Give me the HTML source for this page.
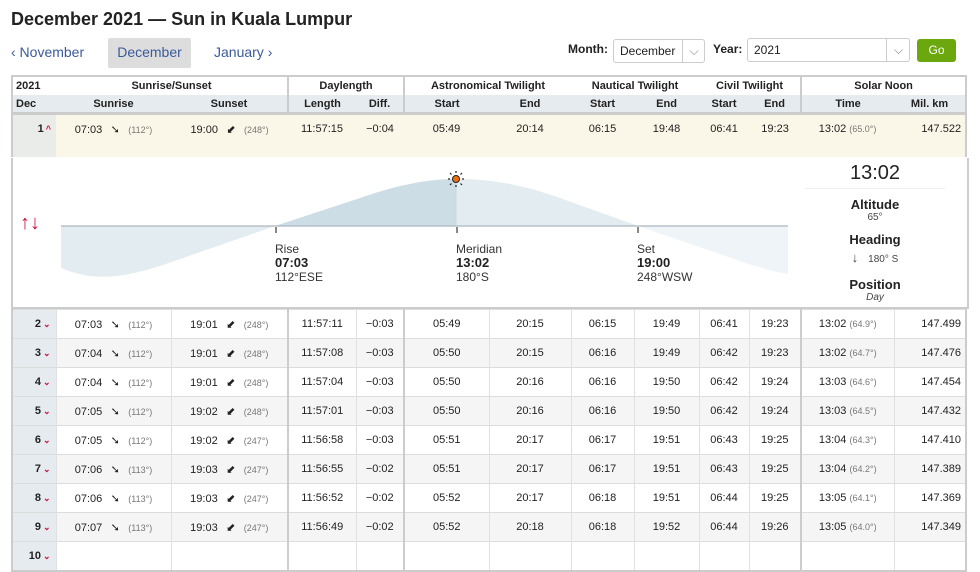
<!DOCTYPE html>
<html><head><meta charset="utf-8"><style>
body{margin:0;background:#fff;font-family:"Liberation Sans",Arial,sans-serif;color:#222;width:980px;height:546px;overflow:hidden;position:relative}
h1{position:absolute;left:11px;top:9px;margin:0;font-size:18px;font-weight:bold;color:#222}
.nav{position:absolute;top:38px;height:30px;line-height:28px;font-size:14px;color:#3a5a9c}
.sel{position:absolute;top:39px;height:22px;border:1px solid #ccc;border-radius:3px;font-size:12px;line-height:22px;background:#fff}
.lbl{position:absolute;top:42px;font-size:12px;font-weight:bold}
table{position:absolute;left:11px;top:75px;border-collapse:collapse;table-layout:fixed;width:954px;font-size:11px;border:2px solid #ccc}
td,th{padding:0;text-align:center;white-space:nowrap;overflow:hidden}
th{font-weight:bold;font-size:11px}
tr.h1 th{height:18px;background:#fff}
tr.h2 th{height:17px;background:#e6ebef;border-bottom:3px solid #ccc}
.g{border-left:2px solid #ccc}
tr.d td{height:28px;border-top:1px solid #ddd;border-left:1px solid #e0e0e0}
tr.d td.g{border-left:2px solid #ccc}
tr.d td.dc{background:#e6ebef;text-align:right;padding-right:5px;font-weight:bold;color:#222}
tr.alt td{background:#f5f5f5}
tr.alt td.dc{background:#e6ebef}
.dc i{color:#d0103a;font-style:normal;font-size:9px;margin-left:2px}
.s{color:#777;font-size:9px}
.ar{display:inline-block;width:14px;font-size:11px;margin:0 6px}
tr.y td{background:#fbf7e8;height:34px;vertical-align:top;padding-top:8px;border-left:none;border-top:none}
tr.y td.dc{background:#e9ece8}
.r{text-align:right!important;padding-right:4px!important}
</style></head><body>
<h1>December 2021 — Sun in Kuala Lumpur</h1>
<div class="nav" style="left:11px">‹ November</div>
<div class="nav" style="left:108px;width:83px;background:#ddd;border-radius:2px;text-align:center">December</div>
<div class="nav" style="left:214px">January ›</div>
<div class="lbl" style="left:568px">Month:</div>
<div class="sel" style="left:613px;width:90px"><span style="padding-left:6px">December</span><span style="position:absolute;left:68px;top:0;width:22px;border-left:1px solid #ccc;text-align:center;color:#888">⌵</span></div>
<div class="lbl" style="left:713px">Year:</div>
<div class="sel" style="left:747px;width:161px;top:38px"><span style="padding-left:6px">2021</span><span style="position:absolute;left:138px;top:0;width:23px;border-left:1px solid #ccc;text-align:center;color:#888">⌵</span></div>
<div style="position:absolute;left:917px;top:39px;width:39px;height:23px;background:#6aa80e;border-radius:3px;color:#fff;font-size:12px;text-align:center;line-height:23px">Go</div>

<table style="border-bottom:none">
<colgroup><col style="width:44px"><col style="width:115px"><col style="width:117px"><col style="width:68px"><col style="width:48px"><col style="width:85px"><col style="width:82px"><col style="width:63px"><col style="width:65px"><col style="width:50px"><col style="width:52px"><col style="width:93px"><col style="width:72px"></colgroup>
<tr class="h1"><th style="text-align:left;padding-left:3px">2021</th><th colspan="2">Sunrise/Sunset</th><th colspan="2" class="g">Daylength</th><th colspan="2" class="g">Astronomical Twilight</th><th colspan="2">Nautical Twilight</th><th colspan="2">Civil Twilight</th><th colspan="2" class="g">Solar Noon</th></tr>
<tr class="h2"><th style="text-align:left;padding-left:3px">Dec</th><th>Sunrise</th><th>Sunset</th><th class="g">Length</th><th>Diff.</th><th class="g">Start</th><th>End</th><th>Start</th><th>End</th><th>Start</th><th>End</th><th class="g">Time</th><th>Mil. km</th></tr>
<tr class="d y"><td class="dc">1<i>^</i></td><td>07:03<span class="ar">➘</span><span class="s">(112°)</span></td><td>19:00<span class="ar">⬋</span><span class="s">(248°)</span></td><td>11:57:15</td><td>−0:04</td><td>05:49</td><td>20:14</td><td>06:15</td><td>19:48</td><td>06:41</td><td>19:23</td><td>13:02 <span class="s">(65.0°)</span></td><td class="r">147.522</td></tr>
</table>
<div style="position:absolute;left:11px;top:158px;width:954px;height:149px;border-left:2px solid #ccc;border-right:2px solid #ccc;border-bottom:2px solid #ccc;box-sizing:content-box;background:#fff"></div>
<!-- chart -->
<svg style="position:absolute;left:0;top:158px" width="980" height="150">
<path d="M61 68 L61 110 C90 122 115 122 160 108 L275 68 Z" fill="#e3ecf0"/>
<path d="M275 68 L360 40 C400 26 430 21 456 21 L456 68 Z" fill="#cddde5"/>
<path d="M456 68 L456 21 C490 21 520 26 560 40 L638 68 Z" fill="#e3ecf0"/>
<path d="M638 68 L720 96 C745 105 765 112 788 116 L788 68 Z" fill="#eef4f7"/>
<line x1="61" y1="68" x2="788" y2="68" stroke="#aab8c0" stroke-width="1.2"/>
<line x1="456" y1="21" x2="456" y2="68" stroke="#c8d8e0"/>
<rect x="275" y="69" width="2" height="6" fill="#888"/><rect x="456" y="69" width="2" height="6" fill="#888"/><rect x="637" y="69" width="2" height="6" fill="#888"/>
<circle cx="456" cy="21" r="3.5" fill="#f07010" stroke="#222" stroke-width="1"/>
<g stroke="#222" stroke-width="1.2"><line x1="456" y1="13" x2="456" y2="15"/><line x1="456" y1="27" x2="456" y2="29"/><line x1="448" y1="21" x2="450" y2="21"/><line x1="462" y1="21" x2="464" y2="21"/><line x1="450" y1="15" x2="451.5" y2="16.5"/><line x1="460.5" y1="25.5" x2="462" y2="27"/><line x1="462" y1="15" x2="460.5" y2="16.5"/><line x1="450" y1="27" x2="451.5" y2="25.5"/></g>
</svg>
<div style="position:absolute;left:20px;top:212px;color:#d0103a;font-size:20px">↑↓</div>
<div style="position:absolute;left:275px;top:242px;font-size:12px;line-height:14px;color:#333">Rise<br><b style="font-size:13px;color:#222">07:03</b><br>112°ESE</div>
<div style="position:absolute;left:456px;top:242px;font-size:12px;line-height:14px;color:#333">Meridian<br><b style="font-size:13px;color:#222">13:02</b><br>180°S</div>
<div style="position:absolute;left:637px;top:242px;font-size:12px;line-height:14px;color:#333">Set<br><b style="font-size:13px;color:#222">19:00</b><br>248°WSW</div>
<div style="position:absolute;left:805px;top:160px;width:140px;text-align:center;color:#222">
<div style="font-size:20px;height:28px;line-height:26px;border-bottom:1px solid #eee">13:02</div>
<div style="font-size:13px;font-weight:bold;margin-top:8px">Altitude</div><div style="font-size:10px;color:#444">65°</div>
<div style="font-size:13px;font-weight:bold;margin-top:9px">Heading</div><div style="font-size:10px;color:#444;margin-top:3px"><b style="font-size:13px;margin-right:10px">↓</b>180° S</div>
<div style="font-size:13px;font-weight:bold;margin-top:12px">Position</div><div style="font-size:10px;color:#444;font-style:italic">Day</div>
</div>

<table style="top:309px;border-top:none">
<colgroup><col style="width:44px"><col style="width:115px"><col style="width:117px"><col style="width:68px"><col style="width:48px"><col style="width:85px"><col style="width:82px"><col style="width:63px"><col style="width:65px"><col style="width:50px"><col style="width:52px"><col style="width:93px"><col style="width:72px"></colgroup>
<tr class="d"><td class="dc">2<i>⌄</i></td><td>07:03<span class="ar">➘</span><span class="s">(112°)</span></td><td>19:01<span class="ar">⬋</span><span class="s">(248°)</span></td><td class="g">11:57:11</td><td>−0:03</td><td class="g">05:49</td><td>20:15</td><td>06:15</td><td>19:49</td><td>06:41</td><td>19:23</td><td class="g">13:02 <span class="s">(64.9°)</span></td><td class="r">147.499</td></tr>
<tr class="d alt"><td class="dc">3<i>⌄</i></td><td>07:04<span class="ar">➘</span><span class="s">(112°)</span></td><td>19:01<span class="ar">⬋</span><span class="s">(248°)</span></td><td class="g">11:57:08</td><td>−0:03</td><td class="g">05:50</td><td>20:15</td><td>06:16</td><td>19:49</td><td>06:42</td><td>19:23</td><td class="g">13:02 <span class="s">(64.7°)</span></td><td class="r">147.476</td></tr>
<tr class="d"><td class="dc">4<i>⌄</i></td><td>07:04<span class="ar">➘</span><span class="s">(112°)</span></td><td>19:01<span class="ar">⬋</span><span class="s">(248°)</span></td><td class="g">11:57:04</td><td>−0:03</td><td class="g">05:50</td><td>20:16</td><td>06:16</td><td>19:50</td><td>06:42</td><td>19:24</td><td class="g">13:03 <span class="s">(64.6°)</span></td><td class="r">147.454</td></tr>
<tr class="d alt"><td class="dc">5<i>⌄</i></td><td>07:05<span class="ar">➘</span><span class="s">(112°)</span></td><td>19:02<span class="ar">⬋</span><span class="s">(248°)</span></td><td class="g">11:57:01</td><td>−0:03</td><td class="g">05:50</td><td>20:16</td><td>06:16</td><td>19:50</td><td>06:42</td><td>19:24</td><td class="g">13:03 <span class="s">(64.5°)</span></td><td class="r">147.432</td></tr>
<tr class="d"><td class="dc">6<i>⌄</i></td><td>07:05<span class="ar">➘</span><span class="s">(112°)</span></td><td>19:02<span class="ar">⬋</span><span class="s">(247°)</span></td><td class="g">11:56:58</td><td>−0:03</td><td class="g">05:51</td><td>20:17</td><td>06:17</td><td>19:51</td><td>06:43</td><td>19:25</td><td class="g">13:04 <span class="s">(64.3°)</span></td><td class="r">147.410</td></tr>
<tr class="d alt"><td class="dc">7<i>⌄</i></td><td>07:06<span class="ar">➘</span><span class="s">(113°)</span></td><td>19:03<span class="ar">⬋</span><span class="s">(247°)</span></td><td class="g">11:56:55</td><td>−0:02</td><td class="g">05:51</td><td>20:17</td><td>06:17</td><td>19:51</td><td>06:43</td><td>19:25</td><td class="g">13:04 <span class="s">(64.2°)</span></td><td class="r">147.389</td></tr>
<tr class="d"><td class="dc">8<i>⌄</i></td><td>07:06<span class="ar">➘</span><span class="s">(113°)</span></td><td>19:03<span class="ar">⬋</span><span class="s">(247°)</span></td><td class="g">11:56:52</td><td>−0:02</td><td class="g">05:52</td><td>20:17</td><td>06:18</td><td>19:51</td><td>06:44</td><td>19:25</td><td class="g">13:05 <span class="s">(64.1°)</span></td><td class="r">147.369</td></tr>
<tr class="d alt"><td class="dc">9<i>⌄</i></td><td>07:07<span class="ar">➘</span><span class="s">(113°)</span></td><td>19:03<span class="ar">⬋</span><span class="s">(247°)</span></td><td class="g">11:56:49</td><td>−0:02</td><td class="g">05:52</td><td>20:18</td><td>06:18</td><td>19:52</td><td>06:44</td><td>19:26</td><td class="g">13:05 <span class="s">(64.0°)</span></td><td class="r">147.349</td></tr>
<tr class="d"><td class="dc">10<i>⌄</i></td><td></td><td></td><td class="g"></td><td></td><td class="g"></td><td></td><td></td><td></td><td></td><td></td><td class="g"></td><td></td></tr>
</table>
</body></html>
